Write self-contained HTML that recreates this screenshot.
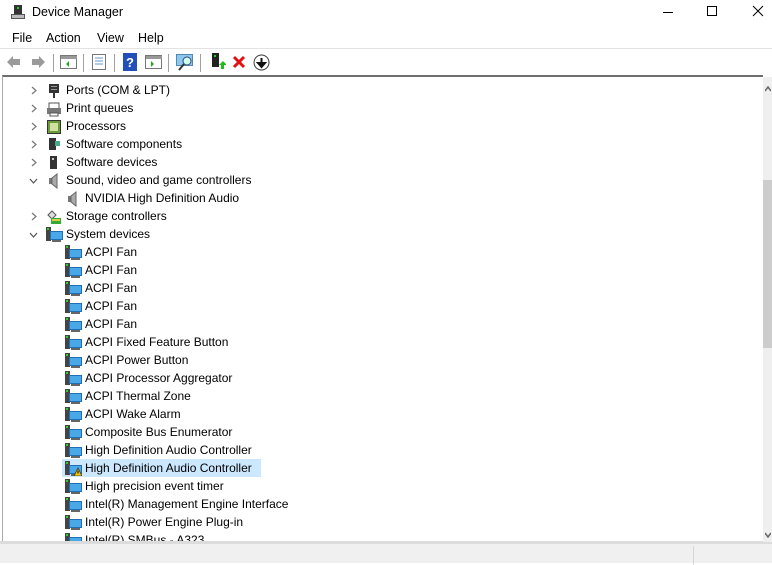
<!DOCTYPE html>
<html><head><style>
*{margin:0;padding:0;box-sizing:border-box}
body{width:772px;height:563px;overflow:hidden;background:#fff;font-family:"Liberation Sans",sans-serif;font-size:12px;color:#000;position:relative}
.abs{position:absolute}
.title{top:0;left:0;width:772px;height:26px;background:#fff}
.menu{top:26px;left:0;width:772px;height:22px;background:#fff}
.menu span{position:absolute;top:5px;font-size:12.5px}
.tb{top:48px;left:0;width:772px;height:27px;background:#fff;border-top:1px solid #e3e3e3}
.sep{position:absolute;top:5px;width:1px;height:18px;background:#a0a0a0}
.tree{top:75px;left:2px;width:761px;height:467px;border-top:2px solid #6e6e6e;border-left:1px solid #ababab;background:#fff;overflow:hidden}
.row{position:absolute;height:18px;line-height:18px;white-space:nowrap;font-size:12px}
.sb{top:77px;left:763px;width:9px;height:465px;background:#efefef}
.thumb{top:180px;left:763px;width:9px;height:168px;background:#cdcdcd}
.status{top:542px;left:0;width:772px;height:21px;background:#f0f0f0;border-top:2px solid #dcdcdc}
</style></head><body>
<div class="abs title">
<svg class="abs" style="left:10px;top:4px" width="16" height="16"><rect x="4" y="1" width="8" height="9" fill="#333"/><rect x="7" y="3" width="2" height="2" fill="#2c2"/><rect x="1" y="10" width="14" height="5" fill="#555"/><rect x="2" y="11" width="12" height="3" fill="#bbb"/></svg>
<span class="abs" style="left:32px;top:5px;font-size:12.5px">Device Manager</span>
<div class="abs" style="left:663px;top:12px;width:10px;height:1px;background:#000"></div>
<div class="abs" style="left:707px;top:6px;width:10px;height:10px;border:1px solid #000"></div>
<svg class="abs" style="left:752px;top:5px" width="12" height="12"><path d="M1 1L11 11M11 1L1 11" stroke="#000" stroke-width="1"/></svg>
</div>
<div class="abs menu"><span style="left:12px">File</span><span style="left:46px">Action</span><span style="left:97px">View</span><span style="left:138px">Help</span></div>
<div class="abs tb">
<svg class="abs" style="left:6px;top:6px" width="40" height="14"><path d="M1 7L7 1V4H14V10H7V13Z" fill="#9a9a9a"/><path d="M39 7L33 1V4H26V10H33V13Z" fill="#9a9a9a"/></svg>
<div class="sep" style="left:53px"></div>
<svg class="abs" style="left:60px;top:6px" width="18" height="15"><rect x="0.5" y="0.5" width="16" height="13" fill="#fff" stroke="#777"/><rect x="1" y="1" width="16" height="3" fill="#999"/><path d="M9 6L6 9L9 12Z" fill="#2a2"/></svg>
<div class="sep" style="left:83px"></div>
<svg class="abs" style="left:91px;top:5px" width="16" height="16"><rect x="1.5" y="0.5" width="13" height="15" fill="#fff" stroke="#777"/><path d="M4 4H12M4 7H12M4 10H12" stroke="#69c"/></svg>
<div class="sep" style="left:114px"></div>
<svg class="abs" style="left:123px;top:4px" width="14" height="18"><rect width="14" height="18" fill="#2250b8"/><text x="3" y="14" fill="#fff" font-size="13" font-weight="bold" font-family="Liberation Sans">?</text></svg>
<svg class="abs" style="left:145px;top:6px" width="18" height="15"><rect x="0.5" y="0.5" width="16" height="13" fill="#fff" stroke="#777"/><rect x="1" y="1" width="16" height="3" fill="#999"/><path d="M6 6L9 9L6 12Z" fill="#2a2"/></svg>
<div class="sep" style="left:168px"></div>
<svg class="abs" style="left:176px;top:4px" width="18" height="18"><rect x="0.5" y="1.5" width="16" height="11" fill="#8cc8f0" stroke="#5588aa"/><circle cx="11" cy="8" r="4" fill="#cfe" stroke="#447"/><path d="M8 11L3 17" stroke="#333" stroke-width="2"/></svg>
<div class="sep" style="left:200px"></div>
<svg class="abs" style="left:210px;top:4px" width="16" height="18"><rect x="2" y="0" width="7" height="14" fill="#222"/><rect x="4" y="2" width="2" height="2" fill="#2c2"/><path d="M9 12L13 8L17 12H14V16H11V12Z" fill="#2b2"/></svg>
<svg class="abs" style="left:232px;top:6px" width="14" height="14"><path d="M2 2L12 12M12 2L2 12" stroke="#e01010" stroke-width="3"/></svg>
<svg class="abs" style="left:253px;top:5px" width="17" height="17"><circle cx="8.5" cy="8.5" r="7.5" fill="#fff" stroke="#333"/><path d="M8.5 4V10M5 9L8.5 13L12 9Z" stroke="#111" stroke-width="2" fill="#111"/></svg>
</div>
<div class="abs tree"></div>
<div id="rows"></div>
<div class="abs sb"></div>
<div class="abs thumb"></div>
<svg class="abs" style="left:765px;top:86px" width="6" height="6"><path d="M0 5L3 1L6 5" stroke="#666" stroke-width="1.5" fill="none"/></svg>
<svg class="abs" style="left:765px;top:532px" width="6" height="6"><path d="M0 1L3 5L6 1" stroke="#666" stroke-width="1.5" fill="none"/></svg>
<div class="abs status"><div class="abs" style="left:693px;top:2px;width:1px;height:19px;background:#d6d6d6"></div></div>
<div class="abs" style="left:0;top:541px;width:763px;height:1px;background:#dcdcdc"></div>
<script>
var sys='<svg width="17" height="15"><rect x="0" y="0" width="5" height="14" fill="#444"/><rect x="1" y="1" width="2" height="2" fill="#3c3"/><rect x="4.5" y="4.5" width="12" height="8" fill="#4aa8e6" stroke="#1e6fb5"/><rect x="6" y="13" width="9" height="2" fill="#666"/></svg>';
var spk='<svg width="16" height="16"><rect x="3" y="5" width="3" height="6" fill="#777"/><path d="M6 5L11 1V15L6 11Z" fill="#aaa" stroke="#666"/></svg>';
var gen='<svg width="16" height="16"><rect x="4" y="1" width="7" height="13" fill="#333"/><rect x="6" y="3" width="2" height="2" fill="#ccc"/></svg>';
var rows=[
[1,'>','<svg width="16" height="16"><rect x="3" y="1" width="10" height="9" fill="#333"/><rect x="5" y="3" width="6" height="1" fill="#999"/><rect x="5" y="6" width="6" height="1" fill="#999"/><rect x="7" y="10" width="2" height="5" fill="#333"/></svg>','Ports (COM &amp; LPT)'],
[1,'>','<svg width="16" height="16"><rect x="3" y="2" width="10" height="6" fill="#fff" stroke="#555"/><rect x="1" y="7" width="14" height="6" fill="#777"/><rect x="4" y="12" width="8" height="3" fill="#fff" stroke="#555"/></svg>','Print queues'],
[1,'>','<svg width="16" height="16"><rect x="1.5" y="1.5" width="13" height="13" fill="#6a9a3a" stroke="#333"/><rect x="4" y="4" width="8" height="8" fill="#cfe0a0"/></svg>','Processors'],
[1,'>','<svg width="16" height="16"><rect x="3" y="1" width="7" height="12" fill="#333"/><rect x="9" y="4" width="5" height="5" fill="#4a8"/></svg>','Software components'],
[1,'>',gen,'Software devices'],
[1,'v',spk,'Sound, video and game controllers'],
[2,'',spk,'NVIDIA High Definition Audio'],
[1,'>','<svg width="16" height="16"><path d="M2 6L6 2L10 6L6 10Z" fill="#ddd" stroke="#555"/><rect x="5" y="9" width="10" height="6" fill="#3a3"/><rect x="6" y="10" width="8" height="2" fill="#dc4"/></svg>','Storage controllers'],
[1,'v',sys,'System devices']];
var s=['ACPI Fan','ACPI Fan','ACPI Fan','ACPI Fan','ACPI Fan','ACPI Fixed Feature Button','ACPI Power Button','ACPI Processor Aggregator','ACPI Thermal Zone','ACPI Wake Alarm','Composite Bus Enumerator','High Definition Audio Controller','*High Definition Audio Controller','High precision event timer','Intel(R) Management Engine Interface','Intel(R) Power Engine Plug-in','Intel(R) SMBus - A323'];
s.forEach(function(t){rows.push([2,'',sys,t]);});
var h='';
rows.forEach(function(r,i){
 var y=81+i*18; var lvl=r[0]; var ix=lvl==1?46:65, tx=lvl==1?66:85;
 var t=r[3]; var warn=t[0]=='*'; if(warn)t=t.slice(1);
 if(y>=540) return;
 var clip=y+18>541?'clip-path:inset(0 0 '+(y+18-541)+'px 0);':'';
 if(warn) h+='<div class="abs" style="left:62px;top:'+y+'px;width:199px;height:18px;background:#cce8ff"></div>';
 if(r[1]=='>') h+='<svg class="abs" style="left:31px;top:'+(y+5)+'px" width="6" height="9"><path d="M1 1L5 4.5L1 8" stroke="#777" fill="none" stroke-width="1.2"/></svg>';
 if(r[1]=='v') h+='<svg class="abs" style="left:29px;top:'+(y+7)+'px" width="9" height="6"><path d="M1 1L4.5 5L8 1" stroke="#555" fill="none" stroke-width="1.2"/></svg>';
 var icon=r[2]; if(warn) icon=sys.replace('</svg>','<path d="M9 15L13 7L17 15Z" fill="#f5c400" stroke="#333" stroke-width="0.8"/><rect x="12.5" y="9.5" width="1" height="3" fill="#000"/></svg>');
 h+='<div class="abs" style="left:'+ix+'px;top:'+(y+2)+'px;'+clip+'">'+icon+'</div>';
 h+='<div class="abs row" style="left:'+tx+'px;top:'+y+'px;'+clip+'">'+t+'</div>';
});
document.getElementById('rows').innerHTML=h;
</script>
</body></html>
